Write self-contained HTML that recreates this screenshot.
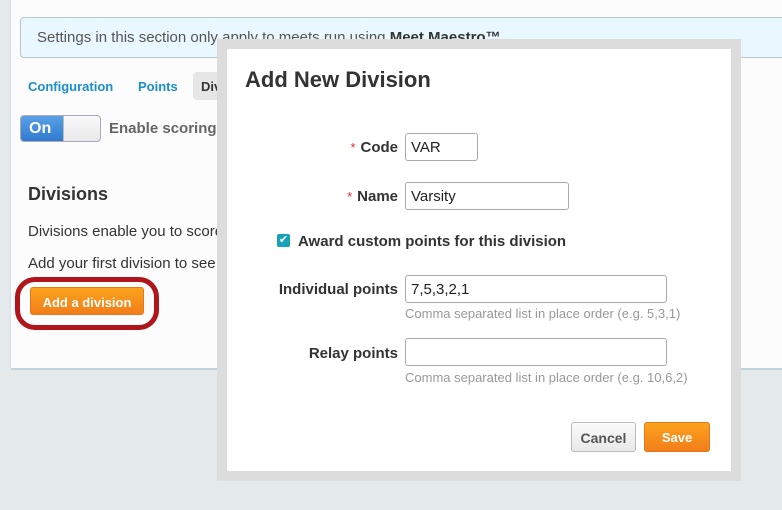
<!DOCTYPE html>
<html><head><style>
*{box-sizing:border-box;margin:0;padding:0}
body{width:782px;height:510px;background:#e4e9ec;font-family:"Liberation Sans",Arial,sans-serif;position:relative;overflow:hidden}
.panel{position:absolute;left:10px;top:-2px;width:790px;height:372px;background:#fcfcfc;border:1px solid #d6e0e4;border-bottom:2px solid #c2d2d8;border-radius:3px}
.info{position:absolute;left:20px;top:17px;width:800px;height:41px;background:#e9f7fe;border:1px solid #b4c6d0;border-radius:4px;font-size:15px;color:#555;padding:11px 16px}
.tab{position:absolute;top:73px;font-size:13px;font-weight:bold;color:#1a8fc9}
.tabact{position:absolute;left:193px;top:72px;width:40px;height:28px;background:#e6e6e6;border-radius:4px;font-size:13px;font-weight:bold;color:#333;padding:7px 8px}
.tog{position:absolute;left:20px;top:115px;width:81px;height:27px;border:1px solid #aab;border-radius:4px;overflow:hidden;background:linear-gradient(#fafafa,#e8e8e8)}
.tog .on{position:absolute;left:0;top:0;width:42px;height:25px;background:linear-gradient(#5aa0e6,#2f7bd0);color:#fff;font-weight:bold;font-size:16px;padding:4px 0 0 8px}
.tog .kn{position:absolute;left:42px;top:0;width:1px;height:25px;background:#bbb}
.t{position:absolute;white-space:nowrap}
.btn{position:absolute;border-radius:3px;font-weight:bold;font-size:13px;text-align:center}
.modal{position:absolute;left:217px;top:39px;width:524px;height:442px;background:#dcdcdc}
.inner{position:absolute;left:10px;top:10px;width:504px;height:422px;background:#fff}
.lbl{position:absolute;font-size:15px;font-weight:bold;color:#333;text-align:right;white-space:nowrap}
.lbl b{color:#e0312b;font-weight:normal;font-size:13px;margin-right:5px}
.inp{position:absolute;height:28px;border:1px solid #aaa;border-radius:3px;font-size:15px;color:#222;padding:5px 5px}
.hint{position:absolute;font-size:13px;color:#999;white-space:nowrap}
</style></head><body>
<div class="panel"></div>
<div class="info">Settings in this section only apply to meets run using <b style="color:#333">Meet Maestro™</b></div>
<div class="tab" style="left:28px;top:79px">Configuration</div>
<div class="tab" style="left:138px;top:79px">Points</div>
<div class="tabact">Divisions</div>
<div class="tog"><div class="on">On</div><div class="kn"></div></div>
<div class="t" style="left:109px;top:120px;font-size:15px;font-weight:bold;color:#666">Enable scoring</div>
<div class="t" style="left:28px;top:184px;font-size:18px;font-weight:bold;color:#333">Divisions</div>
<div class="t" style="left:28px;top:223px;font-size:15px;color:#333">Divisions enable you to score</div>
<div class="t" style="left:28px;top:255px;font-size:15px;color:#333">Add your first division to see</div>
<div style="position:absolute;left:15px;top:277px;width:144px;height:53px;border:5px solid #b0151b;border-radius:20px"></div>
<div class="btn" style="left:30px;top:287px;width:114px;height:28px;background:linear-gradient(#fba21d,#f27e1a);border:1px solid #e07a1a;color:#fff;padding-top:7px">Add a division</div>
<div class="modal"><div class="inner">
<div class="t" style="left:18px;top:18px;font-size:22px;font-weight:bold;color:#333">Add New Division</div>
<div class="lbl" style="right:333px;top:90px"><b>*</b>Code</div>
<div class="inp" style="left:178px;top:84px;width:73px">VAR</div>
<div class="lbl" style="right:333px;top:139px"><b>*</b>Name</div>
<div class="inp" style="left:178px;top:133px;width:164px">Varsity</div>
<div style="position:absolute;left:50px;top:185px;width:13px;height:13px;background:#16a2b8;border-radius:2px;color:#fff;font-size:11px;line-height:13px;text-align:center">✔</div>
<div class="lbl" style="left:71px;top:184px">Award custom points for this division</div>
<div class="lbl" style="right:333px;top:232px">Individual points</div>
<div class="inp" style="left:178px;top:226px;width:262px">7,5,3,2,1</div>
<div class="hint" style="left:178px;top:257px">Comma separated list in place order (e.g. 5,3,1)</div>
<div class="lbl" style="right:333px;top:296px">Relay points</div>
<div class="inp" style="left:178px;top:289px;width:262px"></div>
<div class="hint" style="left:178px;top:321px">Comma separated list in place order (e.g. 10,6,2)</div>
<div class="btn" style="left:344px;top:373px;width:65px;height:30px;background:linear-gradient(#fafafa,#e9e9e9);border:1px solid #bbb;color:#555;padding-top:7px;font-size:14px">Cancel</div>
<div class="btn" style="left:417px;top:373px;width:66px;height:30px;background:linear-gradient(#fba21d,#f27e1a);border:1px solid #e07a1a;color:#fff;padding-top:7px">Save</div>
</div></div>
</body></html>
